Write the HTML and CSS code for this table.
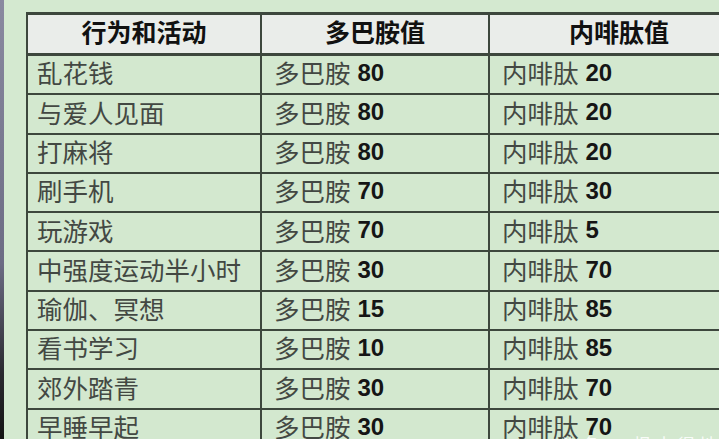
FILE: index.html
```html
<!DOCTYPE html>
<html lang="zh">
<head>
<meta charset="utf-8">
<title>多巴胺与内啡肽</title>
<link rel="stylesheet" href="styles.css">
</head>
<body>
<div class="screen">
  <div class="edge"></div>
  <div class="stage">
    <div class="grid">
      <div class="cell head">行为和活动</div>
      <div class="cell head">多巴胺值</div>
      <div class="cell head">内啡肽值</div>

      <div class="cell">乱花钱</div>
      <div class="cell val">多巴胺 <b>80</b></div>
      <div class="cell val">内啡肽 <b>20</b></div>

      <div class="cell">与爱人见面</div>
      <div class="cell val">多巴胺 <b>80</b></div>
      <div class="cell val">内啡肽 <b>20</b></div>

      <div class="cell">打麻将</div>
      <div class="cell val">多巴胺 <b>80</b></div>
      <div class="cell val">内啡肽 <b>20</b></div>

      <div class="cell">刷手机</div>
      <div class="cell val">多巴胺 <b>70</b></div>
      <div class="cell val">内啡肽 <b>30</b></div>

      <div class="cell">玩游戏</div>
      <div class="cell val">多巴胺 <b>70</b></div>
      <div class="cell val">内啡肽 <b>5</b></div>

      <div class="cell">中强度运动半小时</div>
      <div class="cell val">多巴胺 <b>30</b></div>
      <div class="cell val">内啡肽 <b>70</b></div>

      <div class="cell">瑜伽、冥想</div>
      <div class="cell val">多巴胺 <b>15</b></div>
      <div class="cell val">内啡肽 <b>85</b></div>

      <div class="cell">看书学习</div>
      <div class="cell val">多巴胺 <b>10</b></div>
      <div class="cell val">内啡肽 <b>85</b></div>

      <div class="cell">郊外踏青</div>
      <div class="cell val">多巴胺 <b>30</b></div>
      <div class="cell val">内啡肽 <b>70</b></div>

      <div class="cell">早睡早起</div>
      <div class="cell val">多巴胺 <b>30</b></div>
      <div class="cell val">内啡肽 <b>70</b></div>
    </div>
  </div>
  <div class="mark">头条 @根本得地</div>
</div>
</body>
</html>
```

FILE: styles.css
```css
html, body {
  margin: 0;
  padding: 0;
  width: 719px;
  height: 439px;
  overflow: hidden;
  background: #d3e8cf;
}

.screen {
  position: relative;
  display: flex;
  width: 719px;
  height: 439px;
  overflow: hidden;
}

.edge {
  flex: 0 0 4px;
  background: linear-gradient(to bottom, #8a8aa0 0%, #6c6c84 60%, #2a2a30 85%, #141414 100%);
}

.stage {
  flex: 1;
  padding: 12px 0 0 22px;
  background: #d4e9d0;
  overflow: hidden;
}

.grid {
  display: grid;
  grid-template-columns: 234px 228px 260px;
  grid-template-rows: 41px repeat(10, 39.3px);
  border-top: 3px solid #3d473d;
  border-left: 2px solid #3d473d;
  width: max-content;
}

.cell {
  box-sizing: border-box;
  border-right: 2px solid #3d473d;
  border-bottom: 2px solid #3d473d;
  display: flex;
  align-items: center;
  padding: 0 0 5px 9px;
  font-family: "Noto Sans CJK SC", "Liberation Sans", sans-serif;
  font-size: 25.5px;
  color: #434843;
  background: #d3e8cf;
  white-space: nowrap;
  line-height: 1;
}

.val {
  padding-left: 12px;
}

.cell b {
  font-family: "Liberation Sans", Arial, sans-serif;
  font-weight: bold;
  font-size: 24px;
  color: #151515;
  margin-left: 7px;
  position: relative;
  top: 1px;
}

.head {
  justify-content: center;
  padding: 0 0 6px 0;
  font-weight: bold;
  font-size: 25px;
  color: #111;
  background: #eaedea;
  border-bottom-width: 3px;
}

.mark {
  position: absolute;
  left: 560px;
  top: 431px;
  font-family: "Noto Sans CJK SC", sans-serif;
  font-size: 18px;
  color: rgba(255, 255, 255, 0.85);
  letter-spacing: 4px;
  white-space: nowrap;
}
```
